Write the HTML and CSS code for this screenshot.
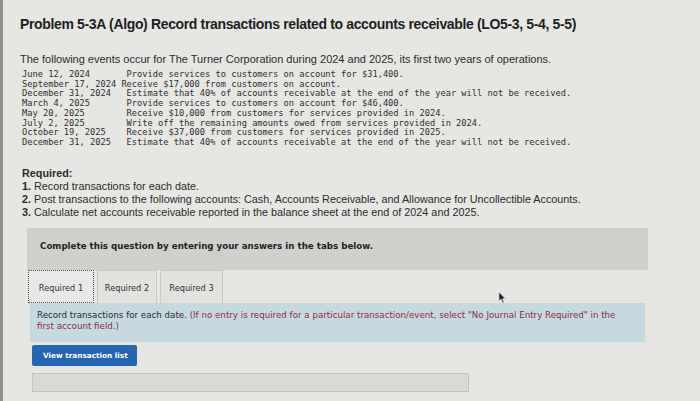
FILE: index.html
```html
<!DOCTYPE html>
<html>
<head>
<meta charset="utf-8">
<link rel="stylesheet" href="styles.css">
</head>
<body>
<div class="page">
  <h1 class="title">Problem 5-3A (Algo) Record transactions related to accounts receivable (LO5-3, 5-4, 5-5)</h1>
  <p class="intro">The following events occur for The Turner Corporation during 2024 and 2025, its first two years of operations.</p>
<pre class="events">June 12, 2024       Provide services to customers on account for $31,400.
September 17, 2024 Receive $17,000 from customers on account.
December 31, 2024   Estimate that 40% of accounts receivable at the end of the year will not be received.
March 4, 2025       Provide services to customers on account for $46,400.
May 20, 2025        Receive $10,000 from customers for services provided in 2024.
July 2, 2025        Write off the remaining amounts owed from services provided in 2024.
October 19, 2025    Receive $37,000 from customers for services provided in 2025.
December 31, 2025   Estimate that 40% of accounts receivable at the end of the year will not be received.</pre>
  <div class="required">
    <div class="req-head">Required:</div>
    <div><b>1.</b> Record transactions for each date.</div>
    <div><b>2.</b> Post transactions to the following accounts: Cash, Accounts Receivable, and Allowance for Uncollectible Accounts.</div>
    <div><b>3.</b> Calculate net accounts receivable reported in the balance sheet at the end of 2024 and 2025.</div>
  </div>
  <div class="question">Complete this question by entering your answers in the tabs below.</div>
  <div class="tabs">
    <div class="tab active">Required 1</div>
    <div class="tab">Required 2</div>
    <div class="tab">Required 3</div>
  </div>
  <div class="instr">Record transactions for each date. <span class="note">(If no entry is required for a particular transaction/event, select "No Journal Entry Required" in the first account field.)</span></div>
  <div class="btn">View transaction list</div>
  <div class="bar"></div>
</div>
<svg class="cursor" width="8" height="12" viewBox="0 0 8 12"><path d="M1 0 L1 9 L3 7 L5 11 L6 10.5 L4.5 6.8 L7 6.5 Z" fill="#222" stroke="#ddd" stroke-width="0.6"/></svg>
</body>
</html>
```

FILE: styles.css
```css
html, body {
  margin: 0;
  padding: 0;
}
body {
  width: 700px;
  height: 401px;
  overflow: hidden;
  background: #e6e7e3;
  border-left: 3px solid #8f8f8b;
  box-sizing: border-box;
  position: relative;
  color: #222;
}
.page {
  padding: 15px 0 0 17px;
}
.title {
  margin: 0;
  font-family: "Liberation Sans", Arial, sans-serif;
  font-weight: bold;
  font-size: 14px;
  line-height: 18px;
  color: #1e1e1e;
  letter-spacing: -0.35px;
}
.intro {
  margin: 19px 0 0 0;
  font-family: "Liberation Sans", Arial, sans-serif;
  font-size: 11px;
  line-height: 14px;
  color: #2a2a2a;
}
.events {
  margin: 4px 0 0 2px;
  font-family: "DejaVu Sans Mono", monospace;
  font-size: 8.7px;
  line-height: 9.7px;
  color: #2e2e2e;
}
.required {
  margin: 19px 0 0 2px;
  font-family: "Liberation Sans", Arial, sans-serif;
  font-size: 10.8px;
  line-height: 13.2px;
  color: #2a2a2a;
}
.req-head {
  font-weight: bold;
}
.question {
  margin: 9px 0 0 7px;
  width: 621px;
  height: 42px;
  box-sizing: border-box;
  padding: 13px 0 0 13px;
  background: #cfd0cc;
  font-family: "DejaVu Sans", Verdana, sans-serif;
  font-weight: bold;
  font-size: 8.7px;
  color: #1f1f1f;
}
.tabs {
  display: flex;
  gap: 3px;
  margin: 0 0 0 8px;
  height: 33px;
}
.tab {
  width: 60px;
  box-sizing: border-box;
  border: 1px solid #c9c9c5;
  border-bottom: none;
  background: #e2e2de;
  font-family: "DejaVu Sans", Verdana, sans-serif;
  font-size: 8.2px;
  color: #333;
  display: flex;
  align-items: center;
  justify-content: center;
  padding-top: 2px;
}
.tab.active {
  width: 66px;
  border: 1px dotted #555;
  background: #e8e9e6;
}
.tab:last-child {
  width: 63px;
}
.instr {
  margin: 0 0 0 10px;
  width: 615px;
  height: 39px;
  box-sizing: border-box;
  padding: 7px 12px 0 7px;
  background: #c6d9e0;
  font-family: "DejaVu Sans", Verdana, sans-serif;
  font-size: 8.7px;
  line-height: 11px;
  color: #2a2a2a;
}
.note {
  color: #8a2e45;
}
.btn {
  margin: 3px 0 0 12px;
  width: 105px;
  height: 21px;
  box-sizing: border-box;
  padding-left: 11px;
  background: #2467b0;
  border-radius: 2px;
  color: #fff;
  font-family: "DejaVu Sans", Verdana, sans-serif;
  font-weight: bold;
  font-size: 7.3px;
  display: flex;
  align-items: center;
}
.bar {
  margin: 7px 0 0 12px;
  width: 437px;
  height: 19px;
  box-sizing: border-box;
  background: #d9dad6;
  border: 1px solid #c4c5c1;
}
.cursor {
  position: absolute;
  left: 495px;
  top: 292px;
}
```
